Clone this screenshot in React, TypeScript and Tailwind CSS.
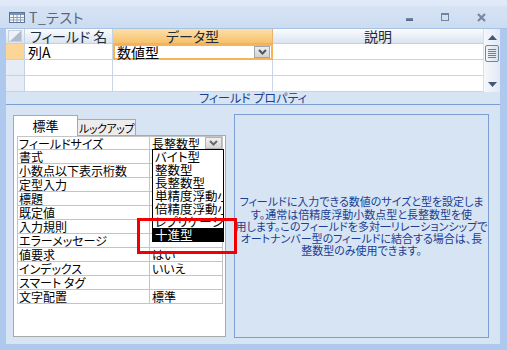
import React from "react";

const rows: [string, string][] = [
  ["フィールドサイズ", "長整数型"],
  ["書式", ""],
  ["小数点以下表示桁数", ""],
  ["定型入力", ""],
  ["標題", ""],
  ["既定値", ""],
  ["入力規則", ""],
  ["エラーメッセージ", ""],
  ["値要求", "はい"],
  ["インデックス", "いいえ"],
  ["スマート タグ", ""],
  ["文字配置", "標準"],
];

const choices = ["バイト型", "整数型", "長整数型", "単精度浮動小数点型", "倍精度浮動小数点型", "レプリケーション ID 型", "十進型"];

const help = [
  "フィールドに入力できる数値のサイズと型を設定しま",
  "す。通常は倍精度浮動小数点型と長整数型を使",
  "用します。このフィールドを多対一リレーションシップで",
  "オートナンバー型のフィールドに結合する場合は、長",
  "整数型のみ使用できます。",
];

const TableIcon = () => (
  <svg width="16" height="11" viewBox="0 0 16 11">
    <rect x="0.5" y="0.5" width="15" height="10" fill="#f4f7fb" stroke="#5f7392" />
    <rect x="1" y="1" width="14" height="2" fill="#7d93b3" />
    <path d="M1 5.5H15M1 8H15M4.5 3V10M8 3V10M11.5 3V10" stroke="#8da0bb" />
  </svg>
);

const Chevron = ({ color = "#4a4a4a" }: { color?: string }) => (
  <svg width="9" height="6" viewBox="0 0 9 6">
    <path d="M1 1L4.5 4.5L8 1" fill="none" stroke={color} strokeWidth="2" />
  </svg>
);

const App = () => {
  return (
    <div className="relative w-[507px] h-[350px] overflow-hidden flex flex-col bg-[#afc9ee] font-['Noto_Sans_CJK_JP',sans-serif] [font-feature-settings:'palt']">
      {/* title bar */}
      <div className="h-[29px] shrink-0 flex items-center border-t-[6px] border-t-[#dfe9f7] border-b border-b-[#a9c2e4] bg-gradient-to-b from-[#d6e3f4] to-[#ccdcf1]">
        <div className="ml-[9px] mt-[1px]">
          <TableIcon />
        </div>
        <span className="ml-[4px] text-[14px] leading-[14px] text-[#5a6678] tracking-[0.5px]">T_テスト</span>
        <div className="ml-auto mr-[21px] flex items-center gap-[28px]">
          <div className="w-[7px] h-[8px] flex items-end">
            <div className="w-[7px] h-[3px] bg-gradient-to-b from-[#7d90ab] to-[#4c6180]" />
          </div>
          <div className="w-[8px] h-[8px] border border-[#6f84a3] border-t-[2px]" />
          <svg width="9" height="9" viewBox="0 0 9 9">
            <path d="M1 1L8 8M8 1L1 8" stroke="#7687a2" strokeWidth="2.2" />
          </svg>
        </div>
      </div>

      <div className="flex-1 flex flex-col pl-[6px] pr-[7px] pb-[6px]">
        {/* field grid */}
        <div className="h-[63px] shrink-0 flex bg-white">
          <div className="w-[477px] flex flex-col">
            <div className="h-[15px] flex text-[14px] leading-[14px] text-[#1f2b38]">
              <div className="w-[19px] border-r border-b border-[#c5d2e4] bg-gradient-to-b from-[#f6f8fc] to-[#dbe4f0] flex items-center justify-center">
                <svg width="14" height="12" viewBox="0 0 14 12">
                  <rect x="0.5" y="0.5" width="13" height="11" fill="#eef2f8" stroke="#c7d2e0" />
                  <path d="M13 1V11H2Z" fill="#aebbcd" />
                </svg>
              </div>
              <div className="w-[88px] pl-[5px] border-r border-b border-[#c5d2e4] bg-gradient-to-b from-[#fbfcfe] to-[#dbe4f0] flex items-center">フィールド 名</div>
              <div className="w-[160px] border-r border-b border-[#e9b46a] bg-gradient-to-b from-[#fbe0a9] to-[#f6c16b] flex items-center justify-center">データ型</div>
              <div className="w-[210px] border-b border-[#c5d2e4] bg-gradient-to-b from-[#fbfcfe] to-[#dbe4f0] flex items-center justify-center">説明</div>
            </div>
            {[0, 1, 2].map((r) => (
              <div key={r} className="h-[16px] flex text-[14px] leading-[14px] text-black">
                <div className={`w-[19px] border-r border-b border-[#c5d2e4] ${r === 0 ? "bg-[#fcd598]" : "bg-[#e6ecf6]"}`} />
                <div className="w-[88px] pl-[3px] border-r border-b border-[#c9d5e6] flex items-center">{r === 0 ? "列A" : ""}</div>
                {r === 0 ? (
                  <div className="w-[160px] border-2 border-[#f6b357] flex items-center pl-[2px]">
                    <span>数値型</span>
                    <div className="ml-auto mr-[1px] w-[16px] h-[12px] border border-[#9ea6b0] bg-gradient-to-b from-[#eceef0] to-[#cfd3d8] flex items-center justify-center">
                      <Chevron color="#555" />
                    </div>
                  </div>
                ) : (
                  <div className="w-[160px] border-r border-b border-[#c9d5e6]" />
                )}
                <div className="w-[210px] border-b border-[#c9d5e6]" />
              </div>
            ))}
          </div>
          {/* scrollbar */}
          <div className="w-[17px] flex flex-col items-center bg-gradient-to-r from-[#f5f8fc] to-[#e2e9f4] border-l border-[#d7e0ec]">
            <div className="h-[16px] flex items-center justify-center">
              <svg width="9" height="5" viewBox="0 0 9 5">
                <path d="M0 5L4.5 0L9 5Z" fill="#43577a" />
              </svg>
            </div>
            <div className="w-[14px] h-[17px] rounded-[2px] border border-[#72869f] bg-gradient-to-r from-[#f2f5fa] to-[#d9e2ee] flex flex-col items-center justify-center gap-[1px]">
              {[0, 1, 2, 3, 4].map((i) => (
                <div key={i} className="w-[8px] h-[1px] bg-[#6f7f96]" />
              ))}
            </div>
            <div className="mt-auto h-[15px] flex items-center justify-center">
              <svg width="9" height="5" viewBox="0 0 9 5">
                <path d="M0 0L4.5 5L9 0Z" fill="#43577a" />
              </svg>
            </div>
          </div>
        </div>

        {/* field properties */}
        <div className="flex-1 flex flex-col bg-[#d6e4f3]">
          <div className="h-[13px] shrink-0 border-b border-[#7c9fd0] text-center text-[12px] leading-[12px] text-[#1c3f8f]">フィールド プロパティ</div>
          <div className="flex-1 flex pl-[7px]">
            <div className="w-[213px] mt-[10px] flex flex-col">
              <div className="h-[20px] flex items-end text-[13px] text-black">
                <div className="relative z-10 -mb-[1px] w-[65px] h-[21px] bg-white border border-b-0 border-[#a9a9a9] flex items-center justify-center leading-[14px]">標準</div>
                <div className="w-[58px] h-[16px] bg-[#ececec] border border-l-0 border-b-0 border-[#a9a9a9] flex items-center justify-center text-[11px] leading-[12px] tracking-[-0.5px] whitespace-nowrap">ルックアップ</div>
              </div>
              <div className="h-[202px] bg-white border border-[#a9a9a9] pl-[3px]">
                <div className="relative w-[206px] border-l border-r border-[#c4c4c4] text-[12px] leading-[13px] text-black">
                  {rows.map(([k, v], i) => (
                    <div key={k} className={`h-[14px] flex border-b border-[#c4c4c4] ${i === 0 ? "border-t" : ""}`}>
                      <div className="w-[132px] pl-[1px] border-r border-[#c4c4c4] whitespace-nowrap">{k}</div>
                      <div className="flex-1 pl-[2px] flex items-center whitespace-nowrap">
                        <span>{v}</span>
                        {i === 0 && (
                          <div className="ml-auto w-[17px] h-[12px] border border-[#b4b4b4] bg-gradient-to-b from-[#f0f0f0] to-[#d6d6d6] flex items-center justify-center">
                            <Chevron color="#6a6a6a" />
                          </div>
                        )}
                      </div>
                    </div>
                  ))}
                  {/* open list */}
                  <div className="absolute z-10 left-[134px] top-[13px] w-[72px] border border-black bg-white overflow-hidden text-[12.5px] leading-[13px]">
                    {choices.map((c, i) => (
                      <div key={c} className={`h-[13px] pl-[2px] overflow-hidden whitespace-nowrap ${i === choices.length - 1 ? "bg-black text-white" : "text-black"}`}>{c}</div>
                    ))}
                  </div>
                </div>
              </div>
            </div>
            <div className="ml-[8px] mt-[9px] w-[255px] h-[224px] border border-[#7d9ed0] flex flex-col items-center justify-center text-[11px] leading-[12.25px] text-[#1b3d92]">
              {help.map((l) => (
                <div key={l} className="whitespace-nowrap">{l}</div>
              ))}
            </div>
          </div>
        </div>
      </div>

      {/* red annotation box */}
      <div className="absolute z-20 left-[137px] top-[218px] w-[100px] h-[36px] border-[3px] border-[#f00000]" />
    </div>
  );
};

export default App;
